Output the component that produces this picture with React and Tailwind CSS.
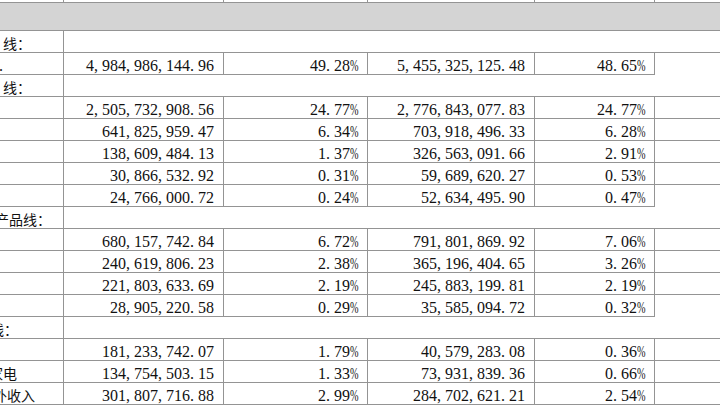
import React from "react";

const GRID = "grid grid-cols-[64px_160px_144px_167px_120px_1fr]";
const B = "border-[#949494]";

function Num({ v }) {
  return (
    <span className="inline-flex font-['Liberation_Serif',serif] text-[16px] leading-[17px] text-[#111]">
      {v.split("").map((c, i) =>
        c === "%" ? (
          <span key={i} className="inline-block w-2">
            <span className="inline-block origin-left scale-x-[0.64] scale-y-[1.06]">%</span>
          </span>
        ) : (
          <span key={i} className="inline-block w-2">
            {c}
          </span>
        )
      )}
    </span>
  );
}

const rows = [
  { s: "线：", off: "ml-[3px]" },
  { d: ["4,984,986,144.96", "49.28%", "5,455,325,125.48", "48.65%"], dot: true },
  { s: "线：", off: "ml-[3px]" },
  { d: ["2,505,732,908.56", "24.77%", "2,776,843,077.83", "24.77%"] },
  { d: ["641,825,959.47", "6.34%", "703,918,496.33", "6.28%"] },
  { d: ["138,609,484.13", "1.37%", "326,563,091.66", "2.91%"] },
  { d: ["30,866,532.92", "0.31%", "59,689,620.27", "0.53%"] },
  { d: ["24,766,000.72", "0.24%", "52,634,495.90", "0.47%"] },
  { s: "产品线：", off: "ml-[-5px]" },
  { d: ["680,157,742.84", "6.72%", "791,801,869.92", "7.06%"] },
  { d: ["240,619,806.23", "2.38%", "365,196,404.65", "3.26%"] },
  { d: ["221,803,633.69", "2.19%", "245,883,199.81", "2.19%"] },
  { d: ["28,905,220.58", "0.29%", "35,585,094.72", "0.32%"] },
  { s: "线：", off: "ml-[-10px]" },
  { d: ["181,233,742.07", "1.79%", "40,579,283.08", "0.36%"] },
  { d: ["134,754,503.15", "1.33%", "73,931,839.36", "0.66%"], label: "家电", off: "ml-[-11px]" },
  { d: ["301,807,716.88", "2.99%", "284,702,621.21", "2.54%"], label: "外收入", off: "ml-[-7px]" },
];

const cjk = "shrink-0 font-['Noto_Sans_CJK_SC','Liberation_Serif',sans-serif] text-[14px] leading-[17px] text-[#111]";

export default function App() {
  return (
    <div className="w-[720px] h-[405px] overflow-hidden bg-white text-[#111]">
      {/* top cut-off header row */}
      <div className={`${GRID} h-[3px]`}>
        {[0, 1, 2, 3, 4].map((i) => (
          <div key={i} className={`border-r border-b ${B}`} />
        ))}
        <div className={`border-b ${B}`} />
      </div>
      {/* gray band */}
      <div className={`h-[28px] bg-[#d4d4d4] border-b ${B}`} />
      {rows.map((r, idx) => {
        const next = rows[idx + 1];
        const lastBorder = next && next.s ? "" : "border-b";
        if (r.s) {
          return (
            <div key={idx} className={`${GRID} h-[22px]`}>
              <div className={`border-r border-b ${B} overflow-hidden whitespace-nowrap flex items-start pt-[4px]`}>
                <span className={`${r.off} ${cjk}`}>{r.s}</span>
              </div>
              <div className={`col-span-5 border-b ${B}`} />
            </div>
          );
        }
        return (
          <div key={idx} className={`${GRID} h-[22px]`}>
            <div className={`border-r border-b ${B} overflow-hidden whitespace-nowrap flex items-start pt-[4px]`}>
              {r.label ? (
                <span className={`${r.off} ${cjk}`}>{r.label}</span>
              ) : r.dot ? (
                <span className="ml-[-1px] font-['Liberation_Serif',serif] text-[16px] leading-[17px]">.</span>
              ) : null}
            </div>
            {r.d.map((v, j) => (
              <div
                key={j}
                className={`border-r border-b ${B} flex justify-end pr-[9px] pt-[4px] whitespace-nowrap`}
              >
                <Num v={v} />
              </div>
            ))}
            <div className={`${lastBorder} ${B}`} />
          </div>
        );
      })}
    </div>
  );
}
